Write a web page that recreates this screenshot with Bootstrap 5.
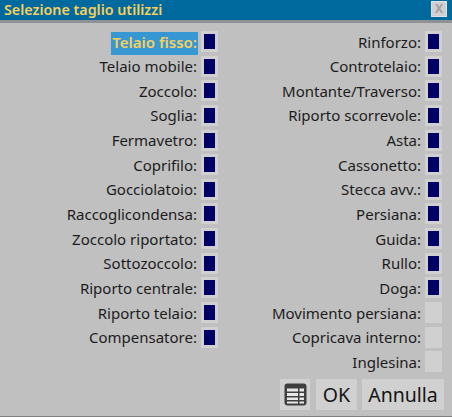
<!DOCTYPE html>
<html lang="en">
  <head>
    <meta charset="UTF-8" />
    <meta name="viewport" content="width=device-width, initial-scale=1.0" />
    <title>Selezione taglio utilizzi</title>
    <link href="https://cdn.jsdelivr.net/npm/bootstrap@5.3.0/dist/css/bootstrap.min.css" rel="stylesheet" />
    <style>
      html, body { height: 100%; }
      body { background: #c0c0c0; font-family: "Noto Sans", "Open Sans", sans-serif; font-size: 15px; color: #1c1c1c; overflow: hidden; }
      .win { width: 452px; height: 417px; border-bottom: 1px solid #808080; }
      .titlebar { height: 23px; background: #006a9e; border-bottom: 3px solid #8d9194; padding-left: 4px; padding-right: 5px; }
      .titletext { color: #f7cf5c; font-weight: 600; font-size: 14.3px; line-height: 20px; }
      .closebtn { width: 16px; height: 16px; margin-top: 1px; background: #d0d0d0; border: 1px solid #e2e2e2; color: #a2a2a2; font-size: 12px; font-weight: 700; line-height: 14px; text-align: center; }
      .cols { padding-top: 6.200px; }
      .leftcol { width: 218px; }
      .rightcol { width: 224px; }
      .fieldrow { height: 24.65px; }
      .fieldlabel { padding: 0 1px; line-height: 20px; white-space: nowrap; margin-right: 3px; }
      .fieldlabel.sel { background: #3797d3; color: #f7cf5c; font-weight: 600; padding-bottom: 3px; margin-bottom: -3px; }
      .tick { width: 17px; height: 21px; background: #d0d0d0; padding: 3px; flex: none; }
      .tick span { display: block; width: 100%; height: 100%; background: #000066; }
      .bottomrow { padding-right: 8px; margin-top: 5px; }
      .winbtn { height: 31px; background: #d0d0d0; font-size: 19.500px; line-height: 31px; color: #141414; text-align: center; }
      .winbtn.grid { width: 30px; margin-right: 2px; }
      .winbtn.ok { width: 41px; margin-right: 1px; }
      .winbtn.cancel { width: 82px; }
    </style>
  </head>
  <body>
    <div class="win d-flex flex-column">
      <div class="titlebar d-flex justify-content-between align-items-start">
        <span class="titletext">Selezione taglio utilizzi</span>
        <span class="closebtn">X</span>
      </div>
      <div class="cols d-flex">
        <div class="leftcol" id="leftCol"></div>
        <div class="rightcol" id="rightCol"></div>
      </div>
      <div class="bottomrow d-flex justify-content-end gap-1">
        <div class="winbtn grid d-flex align-items-center justify-content-center">
          <svg width="23" height="23" viewBox="0 0 23 23">
            <rect x="0.500" y="0.500" width="22" height="22" rx="3" fill="#3f3f3f" />
            <rect x="3" y="5.500" width="11" height="3" fill="#e8e8e8" />
            <rect x="15.500" y="5.500" width="4.500" height="3" fill="#e8e8e8" />
            <rect x="3" y="10" width="11" height="3" fill="#e8e8e8" />
            <rect x="15.500" y="10" width="4.500" height="3" fill="#e8e8e8" />
            <rect x="3" y="14.500" width="11" height="2.500" fill="#e8e8e8" />
            <rect x="15.500" y="14.500" width="4.500" height="2.500" fill="#e8e8e8" />
            <rect x="3" y="18.500" width="11" height="2" fill="#e8e8e8" />
            <rect x="15.500" y="18.500" width="4.500" height="2" fill="#e8e8e8" />
          </svg>
        </div>
        <div class="winbtn ok">OK</div>
        <div class="winbtn cancel">Annulla</div>
      </div>
    </div>
    <script>
      const leftItems = ["Telaio fisso:", "Telaio mobile:", "Zoccolo:", "Soglia:", "Fermavetro:", "Coprifilo:", "Gocciolatoio:", "Raccoglicondensa:", "Zoccolo riportato:", "Sottozoccolo:", "Riporto centrale:", "Riporto telaio:", "Compensatore:"];
      const rightItems = ["Rinforzo:", "Controtelaio:", "Montante/Traverso:", "Riporto scorrevole:", "Asta:", "Cassonetto:", "Stecca avv.:", "Persiana:", "Guida:", "Rullo:", "Doga:", "Movimento persiana:", "Copricava interno:", "Inglesina:"];
      const makeRow = (text, on, sel) => `<div class="fieldrow d-flex justify-content-end align-items-center">
          <span class="fieldlabel${sel ? " sel" : ""}">${text}</span>
          <div class="tick">${on ? "<span></span>" : ""}</div>
        </div>`;
      document.getElementById("leftCol").innerHTML = leftItems.map((t, i) => makeRow(t, true, i === 0)).join("");
      document.getElementById("rightCol").innerHTML = rightItems.map((t, i) => makeRow(t, i < 11, false)).join("");
    </script>
  </body>
</html>
